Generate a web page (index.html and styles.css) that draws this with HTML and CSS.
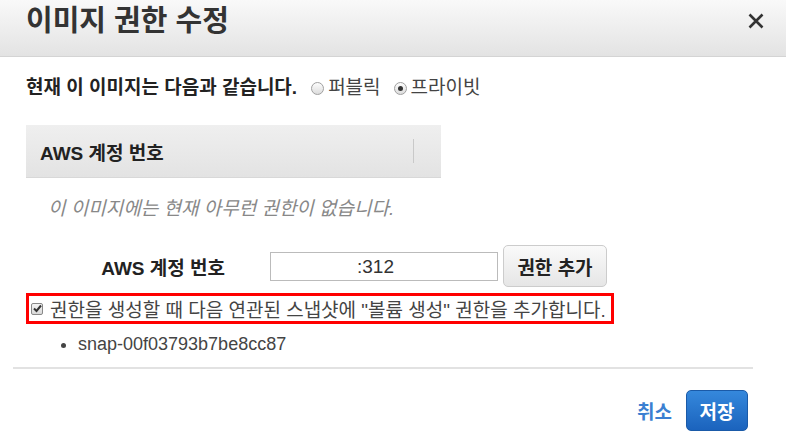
FILE: index.html
```html
<!DOCTYPE html>
<html lang="ko">
<head>
<meta charset="utf-8">
<link rel="stylesheet" href="styles.css">
</head>
<body>
<div class="modal">
  <header class="head">
    <h1 class="title">이미지 권한 수정</h1>
    <button class="close" aria-label="닫기">
      <svg width="16" height="16" viewBox="0 0 16 16"><path d="M1.5 1.5 L14.5 14.5 M14.5 1.5 L1.5 14.5" stroke="#333" stroke-width="2.6" stroke-linecap="butt"/></svg>
    </button>
  </header>
  <div class="body">
    <div class="current">
      <b class="current-label">현재 이 이미지는 다음과 같습니다.</b>
      <span class="opt"><span class="radio"></span>퍼블릭</span>
      <span class="opt"><span class="radio on"></span>프라이빗</span>
    </div>
    <div class="thead">
      <span class="th-text">AWS 계정 번호</span>
      <span class="th-sep"></span>
    </div>
    <p class="empty">이 이미지에는 현재 아무런 권한이 없습니다.</p>
    <div class="addrow">
      <span class="addlabel">AWS 계정 번호</span>
      <div class="field"><span class="fieldval">:312</span></div>
      <button class="btn">권한 추가</button>
    </div>
    <div class="checkrow">
      <span class="cb"><svg width="9" height="9" viewBox="0 0 9 9"><path d="M1 4.5 L3.5 7 L8 1.5" fill="none" stroke="#333" stroke-width="2"/></svg></span>
      <span class="checktext">권한을 생성할 때 다음 연관된 스냅샷에 "볼륨 생성" 권한을 추가합니다.</span>
    </div>
    <ul class="snaps">
      <li>snap-00f03793b7be8cc87</li>
    </ul>
  </div>
  <div class="rule"></div>
  <footer class="foot">
    <a class="cancel">취소</a>
    <button class="save">저장</button>
  </footer>
</div>
</body>
</html>
```
FILE: styles.css
```css
* { box-sizing: border-box; }
html, body { margin: 0; padding: 0; background: #fff; }
body {
  font-family: "Liberation Sans", "Noto Sans CJK KR", sans-serif;
  color: #333;
  width: 786px;
  height: 441px;
  overflow: hidden;
}
.modal { width: 786px; }
.head {
  height: 57px;
  background: linear-gradient(#f9f9f9, #e3e3e3);
  border-bottom: 1px solid #d4d4d4;
  display: flex;
  align-items: center;
  justify-content: space-between;
  padding: 0 22px 0 26px;
}
.title {
  margin: 0;
  font-size: 29px;
  font-weight: 700;
  color: #333;
  line-height: 1;
  margin-top: -14px;
}
.close {
  border: 0;
  background: none;
  padding: 0;
  margin-top: -15px;
  display: flex;
}
.body { padding: 0 26px; }
.current {
  display: flex;
  align-items: center;
  margin-top: 21px;
  height: 20px;
  font-size: 19px;
  line-height: 20px;
}
.current-label { font-weight: 700; color: #222; margin-right: 14px; }
.opt { display: inline-flex; align-items: center; color: #444; margin-right: 13px; }
.radio {
  width: 13px; height: 13px;
  border-radius: 50%;
  border: 1px solid #a0a0a0;
  background: linear-gradient(#fdfdfd, #dcdcdc);
  margin-right: 4px;
  display: inline-flex;
  align-items: center;
  justify-content: center;
}
.radio.on::after {
  content: "";
  width: 5px; height: 5px;
  border-radius: 50%;
  background: #333;
}
.thead {
  margin-top: 27px;
  width: 415px;
  height: 53px;
  background: linear-gradient(#efefef, #e3e3e3);
  border-bottom: 1px solid #d8d8d8;
  display: flex;
  align-items: center;
  justify-content: space-between;
  padding: 0 27px 0 14px;
}
.th-text { font-weight: 700; font-size: 19px; color: #222; }
.th-sep { width: 1px; height: 24px; background: #c9c9c9; }
.empty {
  margin: 20px 0 0 22px;
  font-style: italic;
  color: #888;
  font-size: 19px;
  line-height: 22px;
}
.addrow {
  margin-top: 25px;
  display: flex;
  align-items: center;
  height: 42px;
}
.addlabel {
  width: 199px;
  text-align: right;
  font-weight: 700;
  font-size: 19px;
  color: #222;
}
.field {
  margin-left: 45px;
  width: 228px;
  height: 29px;
  border: 1px solid #bbb;
  background: #fff;
  font-size: 19px;
  line-height: 27px;
  padding-left: 86px;
  color: #333;
}
.btn {
  margin-left: 5px;
  width: 104px;
  height: 42px;
  border: 1px solid #ccc;
  border-radius: 5px;
  background: linear-gradient(#fafafa, #e6e6e6);
  font-family: inherit;
  font-weight: 700;
  font-size: 19px;
  color: #222;
}
.checkrow {
  margin-top: 6px;
  width: 588px;
  height: 31px;
  border: 3px solid #f00;
  display: flex;
  align-items: center;
  padding-left: 2px;
  font-size: 19px;
  color: #444;
  white-space: nowrap;
}
.cb {
  width: 12px; height: 12px;
  border: 1px solid #888;
  border-radius: 2px;
  background: linear-gradient(#f4f4f4, #d8d8d8);
  display: inline-flex;
  align-items: center;
  justify-content: center;
  margin-right: 7px;
}
.snaps {
  margin: 8px 0 0 0;
  padding-left: 52px;
  font-size: 18px;
  line-height: 24px;
  color: #444;
}
.rule {
  margin: 11px 33px 0 13px;
  height: 2px;
  background: #e2e2e2;
}
.foot {
  display: flex;
  justify-content: flex-end;
  align-items: center;
  margin-top: 21px;
  padding-right: 38px;
}
.cancel {
  color: #3b7fd1;
  font-size: 19px;
  font-weight: 700;
  margin-right: 14px;
}
.save {
  width: 62px;
  height: 41px;
  border: 1px solid #1a5aa8;
  border-radius: 5px;
  background: linear-gradient(#3588dc, #1b63bd);
  color: #fff;
  font-family: inherit;
  font-weight: 700;
  font-size: 19px;
}
```
